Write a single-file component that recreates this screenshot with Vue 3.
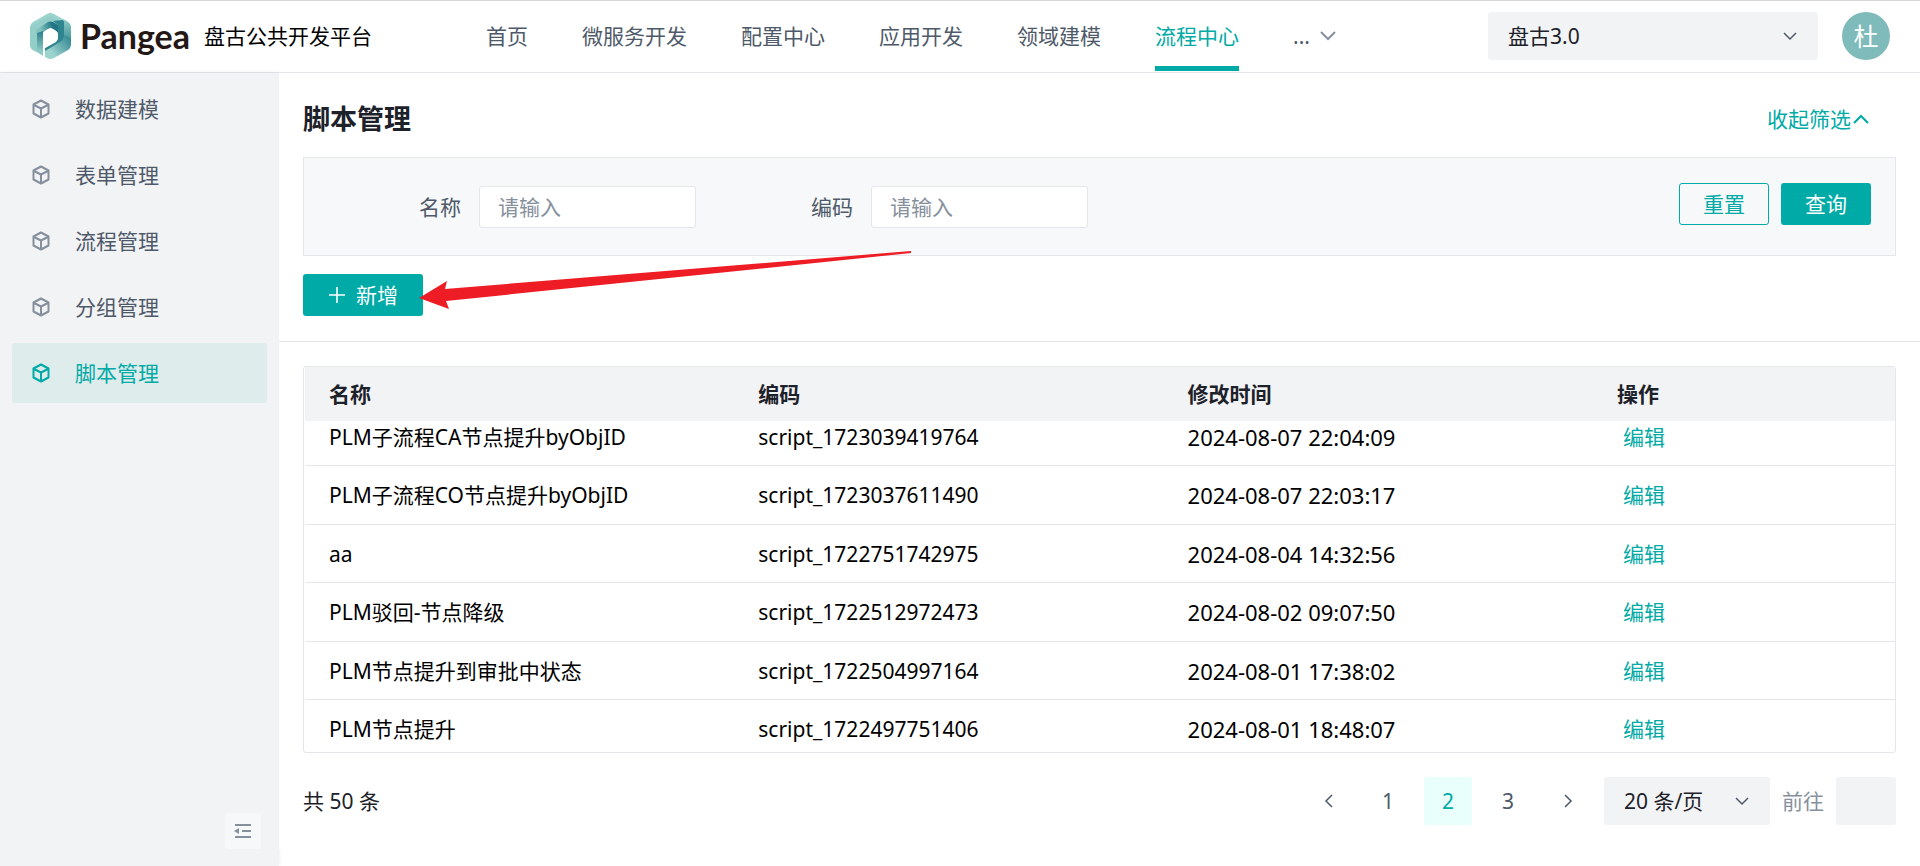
<script setup>
import { onMounted, ref } from 'vue'

const navItems = ['首页', '微服务开发', '配置中心', '应用开发', '领域建模', '流程中心']
const sideItems = ['数据建模', '表单管理', '流程管理', '分组管理', '脚本管理']
const rows = [
  { name: 'PLM子流程CA节点提升byObjID', code: 'script_1723039419764', time: '2024-08-07 22:04:09' },
  { name: 'PLM子流程CO节点提升byObjID', code: 'script_1723037611490', time: '2024-08-07 22:03:17' },
  { name: 'aa', code: 'script_1722751742975', time: '2024-08-04 14:32:56' },
  { name: 'PLM驳回-节点降级', code: 'script_1722512972473', time: '2024-08-02 09:07:50' },
  { name: 'PLM节点提升到审批中状态', code: 'script_1722504997164', time: '2024-08-01 17:38:02' },
  { name: 'PLM节点提升', code: 'script_1722497751406', time: '2024-08-01 18:48:07' },
]
const name = ref('')
const code = ref('')
const goto = ref('')
const scroller = ref(null)

onMounted(() => {
  scroller.value.scrollTop = 13
})
</script>

<template>
  <div class="page">
    <header class="topbar">
      <div class="brand">
        <svg class="logo" viewBox="0 0 41 46" aria-hidden="true">
          <defs>
            <linearGradient id="roof" x1="0" y1="0.6" x2="1" y2="0.4">
              <stop offset="0.2" stop-color="#83c3be" />
              <stop offset="0.8" stop-color="#1f7583" />
            </linearGradient>
            <linearGradient id="leg" x1="0" y1="0" x2="0" y2="1">
              <stop offset="0" stop-color="#2b7f8b" />
              <stop offset="0.8" stop-color="#8ccac4" />
            </linearGradient>
            <linearGradient id="wing" x1="0" y1="1" x2="1" y2="0.3">
              <stop offset="0.3" stop-color="#9bd3cd" />
              <stop offset="1" stop-color="#3c8f98" />
            </linearGradient>
            <linearGradient id="edge" x1="0" y1="0" x2="0" y2="1">
              <stop offset="0" stop-color="#8fccc6" />
              <stop offset="1" stop-color="#2f8791" />
            </linearGradient>
          </defs>
          <path d="M17 1Q20.500 -1 24 1L38 9Q41 11 41 14V20L20 9L7 17V39L3 37Q0 35 0 31V14Q0 11 3 9Z" fill="#9bd3cd" />
          <path d="M0 14L18 4Q20.500 3 23 4L35 11V20L28 22Q28 18 20.500 15Q13 18 13 21L7 24V39L3 37Q0 35 0 31Z" fill="#93cec8" />
          <path d="M6 17L18 9Q20.500 8 23 9L28 12V21Q27 17 20.500 15Q15 17 13 20L7 23Z" fill="url(#roof)" />
          <path d="M7 20L13 18V43L7 39Z" fill="url(#leg)" />
          <path d="M23 8L33 7L35 10V24Q35 27 31 29L15 39V35L26 29Q28 27 28 24V12Z" fill="#2f858f" />
          <path d="M33 6L38 9Q41 11 41 14V31L34 33V9Z" fill="url(#edge)" />
          <path d="M15 38L30 29Q34 27 34 22L41 25V31Q41 35 38 37L24 45Q20.500 47 17 45L15 44Z" fill="url(#wing)" />
          <path d="M13 44V21Q13 18 20.500 15Q28 18 28 21V24Q28 27 25 29L15 35V45Z" fill="#fff" />
        </svg>
        <span class="wordmark">Pangea</span>
        <span class="product">盘古公共开发平台</span>
      </div>
      <nav class="nav">
        <a v-for="item in navItems" :key="item" href="#" class="nav-link" :class="{ active: item === '流程中心' }">{{ item }}</a>
        <button type="button" class="more" aria-label="更多">
          <span>...</span>
          <svg width="16" height="10" viewBox="0 0 16 10"><path d="M1 1L8 8L15 1" fill="none" stroke="#86909c" stroke-width="2" /></svg>
        </button>
      </nav>
      <div class="select version">
        <select aria-label="版本"><option>盘古3.0</option></select>
        <svg width="14" height="9" viewBox="0 0 14 9"><path d="M1 1L7 7L13 1" fill="none" stroke="#4e5969" stroke-width="1.500" /></svg>
      </div>
      <button type="button" class="avatar">杜</button>
    </header>

    <div class="body">
      <aside class="sidebar">
        <nav class="menu">
          <a v-for="item in sideItems" :key="item" href="#" class="menu-item" :class="{ active: item === '脚本管理' }">
            <svg width="18" height="20" viewBox="0 0 18 20" fill="none" stroke="currentColor" stroke-width="2" stroke-linejoin="round">
              <path d="M9 1.500L16.500 5.500V14.500L9 18.500L1.500 14.500V5.500Z" />
              <path d="M2 6L9 9.500L16 6M9 9.500V18" />
            </svg>
            <span>{{ item }}</span>
          </a>
        </nav>
        <button type="button" class="collapse" aria-label="收起菜单">
          <svg width="18" height="14" viewBox="0 0 18 14" fill="none" stroke="#86909c" stroke-width="2">
            <path d="M1 1H17M8 7H17M1 13H17" />
            <path d="M0 7L5 4V10Z" fill="#86909c" stroke="none" />
          </svg>
        </button>
      </aside>

      <main class="main">
        <section class="upper">
          <div class="title-row">
            <h1>脚本管理</h1>
            <button type="button" class="toggle">
              收起筛选
              <svg width="16" height="10" viewBox="0 0 16 10"><path d="M1 9L8 2L15 9" fill="none" stroke="currentColor" stroke-width="2" /></svg>
            </button>
          </div>
          <form class="filter" @submit.prevent>
            <div class="field">
              <label for="f-name">名称</label>
              <input id="f-name" v-model="name" type="text" placeholder="请输入" />
            </div>
            <div class="field">
              <label for="f-code">编码</label>
              <input id="f-code" v-model="code" type="text" placeholder="请输入" />
            </div>
            <div class="actions">
              <button type="reset" class="btn outline">重置</button>
              <button type="submit" class="btn primary">查询</button>
            </div>
          </form>
          <div class="tools">
            <button type="button" class="btn primary add">
              <svg width="18" height="18" viewBox="0 0 18 18"><path d="M9 1V17M1 9H17" stroke="#fff" stroke-width="1.600" /></svg>
              新增
            </button>
            <svg class="arrow" width="494" height="62" viewBox="0 0 494 62" aria-hidden="true">
              <path d="M1 47L29 30L27 38L493 0V2L28 50L31 58Z" fill="#ee1c24" />
            </svg>
          </div>
        </section>

        <section class="lower">
          <div class="table-box">
            <div ref="scroller" class="scroller">
              <table>
                <thead>
                  <tr><th>名称</th><th>编码</th><th>修改时间</th><th class="last">操作</th></tr>
                </thead>
                <tbody>
                  <tr v-for="row in rows" :key="row.code">
                    <td>{{ row.name }}</td>
                    <td>{{ row.code }}</td>
                    <td class="time">{{ row.time }}</td>
                    <td><a href="#" class="edit">编辑</a></td>
                  </tr>
                </tbody>
              </table>
            </div>
          </div>
          <div class="pager">
            <span class="total">共 50 条</span>
            <button type="button" class="page-btn" aria-label="上一页">
              <svg width="9" height="14" viewBox="0 0 9 14"><path d="M8 1L2 7L8 13" fill="none" stroke="#4e5969" stroke-width="1.500" /></svg>
            </button>
            <button type="button" class="page-btn">1</button>
            <button type="button" class="page-btn current">2</button>
            <button type="button" class="page-btn">3</button>
            <button type="button" class="page-btn" aria-label="下一页">
              <svg width="9" height="14" viewBox="0 0 9 14"><path d="M1 1L7 7L1 13" fill="none" stroke="#4e5969" stroke-width="1.500" /></svg>
            </button>
            <div class="select size">
              <select aria-label="每页条数"><option>20 条/页</option></select>
              <svg width="14" height="9" viewBox="0 0 14 9"><path d="M1 1L7 7L13 1" fill="none" stroke="#4e5969" stroke-width="1.500" /></svg>
            </div>
            <label for="goto" class="goto-label">前往</label>
            <input id="goto" v-model="goto" type="text" class="goto" />
          </div>
        </section>
      </main>
    </div>
  </div>
</template>

<style>
body {
  margin: 0;
}
</style>

<style scoped>
.page,
.page * {
  box-sizing: border-box;
}
.page {
  display: flex;
  flex-direction: column;
  height: 100vh;
  font-family: "Noto Sans", "Noto Sans CJK SC", sans-serif;
  font-size: 21px;
  line-height: 32px;
  color: #1d2129;
  background: #fff;
}
button,
input,
select {
  margin: 0;
  padding: 0;
  border: 0;
  border-radius: 3px;
  font: inherit;
  color: inherit;
  background: none;
  outline: none;
}
button {
  cursor: pointer;
}
a {
  text-decoration: none;
}
svg {
  display: block;
  flex: none;
}

.topbar {
  display: flex;
  flex: none;
  align-items: center;
  height: 73px;
  padding: 0 30px 1px;
  border-top: 1px solid #d9d9d9;
  border-bottom: 1px solid #e5e6eb;
}
.brand {
  display: flex;
  align-items: center;
  width: 456px;
}
.logo {
  width: 41px;
  height: 46px;
  margin-right: 9px;
}
.wordmark {
  width: 124px;
  font-family: Lato, sans-serif;
  font-size: 34px;
  font-weight: 700;
  color: #231815;
}
.product {
  color: #000;
}
.nav {
  display: flex;
  flex: 1;
  gap: 54px;
  height: 100%;
}
.nav-link {
  display: flex;
  align-items: center;
  padding-top: 5px;
  border-bottom: 5px solid transparent;
  color: #4e5969;
}
.nav-link.active {
  color: #00aaa6;
  border-color: #00aaa6;
}
.more {
  display: flex;
  align-items: center;
  gap: 10px;
  color: #4e5969;
}
.select {
  position: relative;
  display: flex;
  align-items: center;
  height: 48px;
  border-radius: 3px;
  background: #f2f3f5;
}
.select select {
  width: 100%;
  height: 48px;
  padding: 0 20px;
  appearance: none;
}
.select svg {
  position: absolute;
  right: 21px;
  pointer-events: none;
}
.version {
  width: 330px;
  margin-right: 24px;
}
.avatar {
  width: 48px;
  height: 48px;
  border-radius: 50%;
  font-size: 25px;
  color: #fff;
  background: #7fbbba;
}

.body {
  display: flex;
  flex: 1;
  min-height: 0;
}
.sidebar {
  display: flex;
  flex: none;
  flex-direction: column;
  justify-content: space-between;
  width: 279px;
  padding: 6px 12px 17px;
  background: #f2f3f5;
  box-shadow: 0 0 4px rgba(0, 0, 0, 0.08);
}
.menu {
  display: flex;
  flex-direction: column;
  gap: 6px;
}
.menu-item {
  display: flex;
  align-items: center;
  gap: 25px;
  height: 60px;
  padding-left: 20px;
  border-radius: 3px;
  color: #4e5969;
}
.menu-item svg {
  color: #86909c;
}
.menu-item.active,
.menu-item.active svg {
  color: #00aaa6;
}
.menu-item.active {
  background: #dfecec;
}
.collapse {
  display: flex;
  align-items: center;
  justify-content: center;
  align-self: flex-end;
  width: 36px;
  height: 36px;
  margin-right: 6px;
  background: #f7f8fa;
}

.main {
  position: relative;
  display: flex;
  flex: 1;
  flex-direction: column;
  min-width: 0;
  margin-bottom: 17px;
  background: #fff;
}
.upper {
  padding: 24px 24px 25px;
  border-bottom: 1px solid #e5e6eb;
}
.title-row {
  display: flex;
  align-items: center;
  justify-content: space-between;
  height: 44px;
  margin-bottom: 16px;
  padding-right: 27px;
}
h1 {
  margin: 0;
  font-size: 27px;
  font-weight: 700;
}
.toggle {
  display: flex;
  align-items: center;
  gap: 2px;
  color: #00aaa6;
}
.filter {
  display: flex;
  align-items: flex-start;
  height: 99px;
  padding: 25px 24px 0 0;
  border: 1px solid #e5e6eb;
  background: #f7f8fa;
}
.field {
  display: flex;
  align-items: center;
  justify-content: flex-end;
  gap: 18px;
  width: 392px;
  margin-top: 3px;
  color: #4e5969;
}
.field input {
  width: 217px;
  height: 42px;
  padding: 0 18px;
  border: 1px solid #e5e6eb;
  background: #fff;
}
.field input::placeholder {
  color: #86909c;
}
.actions {
  display: flex;
  gap: 12px;
  margin-left: auto;
}
.btn {
  display: flex;
  align-items: center;
  justify-content: center;
  width: 90px;
  height: 42px;
}
.outline {
  border: 1px solid #00aaa6;
  color: #00aaa6;
}
.primary {
  color: #fff;
  background: #00aaa6;
}
.tools {
  position: relative;
  margin-top: 18px;
}
.add {
  gap: 10px;
  width: 120px;
}
.arrow {
  position: absolute;
  left: 115px;
  top: -23px;
  pointer-events: none;
}

.lower {
  display: flex;
  flex: 1;
  flex-direction: column;
  gap: 24px;
  min-height: 0;
  padding: 24px;
}
.table-box {
  flex: 1;
  min-height: 0;
  padding: 0 0 0 1px;
  border: 1px solid #e5e6eb;
  border-radius: 3px;
}
.scroller {
  height: 100%;
  overflow-y: auto;
  scrollbar-width: none;
}
table {
  width: 100%;
  table-layout: fixed;
  border-collapse: separate;
  border-spacing: 0;
}
th,
td {
  width: 27%;
  padding: 0 24px;
  text-align: left;
}
th {
  position: sticky;
  top: 0;
  height: 54px;
  font-weight: 700;
  background: #f2f3f5;
}
th.last {
  width: 19%;
}
td {
  height: 58px;
  border-bottom: 1px solid #e5e6eb;
  color: #000;
}
tr:nth-child(even) td {
  height: 59px;
}
.time {
  font-size: 22px;
}
.edit {
  padding-left: 6px;
  color: #00aaa6;
}
.pager {
  display: flex;
  align-items: center;
  gap: 12px;
}
.total {
  margin-right: auto;
}
.page-btn {
  display: flex;
  align-items: center;
  justify-content: center;
  width: 48px;
  height: 48px;
  color: #4e5969;
}
.page-btn.current {
  color: #00aaa6;
  background: #e8fffc;
}
.size {
  width: 166px;
}
.goto-label {
  color: #86909c;
}
.goto {
  width: 60px;
  height: 48px;
  background: #f2f3f5;
}
</style>
